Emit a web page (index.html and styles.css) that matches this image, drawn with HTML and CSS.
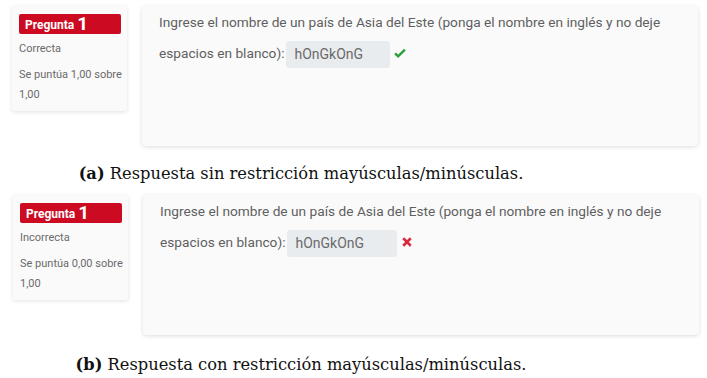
FILE: index.html
```
<!DOCTYPE html>
<html lang="es">
<head>
    <meta charset="UTF-8">
    <meta name="viewport" content="width=device-width, initial-scale=1.0">
    <title>Pregunta 1</title>
    <link rel="stylesheet" href="styles.css">
</head>
<body>
    <div class="figure">
        <div class="question">
            <div class="info">
                <div class="qno">Pregunta <span class="num">1</span></div>
                <p class="state">Correcta</p>
                <p class="grade">Se puntúa 1,00 sobre 1,00</p>
            </div>
            <div class="content">
                Ingrese el nombre de un país de Asia del Este (ponga el nombre en inglés y no deje espacios en blanco):<span class="answer">hOnGkOnG</span><svg class="icon ok" viewBox="0 0 16 16"><path d="M1.5 8.5 L5.5 12.5 L14.5 3.5" fill="none" stroke="#2a9d3c" stroke-width="3.2"/></svg>
            </div>
        </div>
        <p class="caption"><b>(a)</b> Respuesta sin restricción mayúsculas/minúsculas.</p>

        <div class="question second">
            <div class="info">
                <div class="qno">Pregunta <span class="num">1</span></div>
                <p class="state">Incorrecta</p>
                <p class="grade">Se puntúa 0,00 sobre 1,00</p>
            </div>
            <div class="content">
                Ingrese el nombre de un país de Asia del Este (ponga el nombre en inglés y no deje espacios en blanco):<span class="answer wide">hOnGkOnG</span><svg class="icon bad" viewBox="0 0 16 16"><path d="M3 3 L13 13 M13 3 L3 13" fill="none" stroke="#d9273c" stroke-width="3.4"/></svg>
            </div>
        </div>
        <p class="caption"><b>(b)</b> Respuesta con restricción mayúsculas/minúsculas.</p>
    </div>
</body>
</html>
```
FILE: styles.css
```
* {
    margin: 0;
    padding: 0;
    box-sizing: border-box;
}

body {
    background-color: white;
    font-family: Roboto, 'Liberation Sans', sans-serif;
}

.figure {
    padding: 6px 0 0 12px;
}

.question {
    display: flex;
    align-items: flex-start;
    gap: 15px;
}

.question.second {
    padding-left: 1px;
}

.info {
    width: 115px;
    height: 105px;
    padding: 8px 5px 6px 7px;
    background-color: #fafafa;
    border-radius: 2px;
    box-shadow: 0 1px 4px rgba(0,0,0,0.12);
    color: #6a6a6a;
    font-size: 11px;
    line-height: 20px;
}

.qno {
    height: 20px;
    margin-right: 1px;
    background-color: #cc0a22;
    color: white;
    border-radius: 2px;
    padding-left: 6px;
    font-size: 12px;
    font-weight: bold;
    line-height: 20px;
    margin-bottom: 5px;
}

.num {
    font-size: 19px;
    vertical-align: -1px;
}

.state {
    margin-bottom: 6px;
}

.content {
    width: 556px;
    height: 140px;
    padding: 1px 17px 0 17px;
    background-color: #fafafa;
    border-radius: 4px;
    box-shadow: 0 1px 4px rgba(0,0,0,0.14);
    color: #5f5f5f;
    font-size: 13.7px;
    line-height: 31px;
}

.answer {
    display: inline-block;
    width: 104px;
    height: 27px;
    line-height: 27px;
    padding: 0 9px;
    margin-left: 1px;
    background-color: #e9ecef;
    border-radius: 3px;
    color: #6a6a6a;
    font-size: 14px;
    vertical-align: middle;
}

.answer.wide {
    width: 110px;
}

.icon {
    width: 12px;
    height: 12px;
    margin-left: 4px;
    vertical-align: -1px;
}

.caption {
    width: 578px;
    text-align: center;
    font-family: 'DejaVu Serif', serif;
    font-size: 16.3px;
    line-height: 20px;
    color: #111;
    margin: 18px 0 11px;
}

.caption + .question + .caption {
    margin-top: 20px;
}
```
